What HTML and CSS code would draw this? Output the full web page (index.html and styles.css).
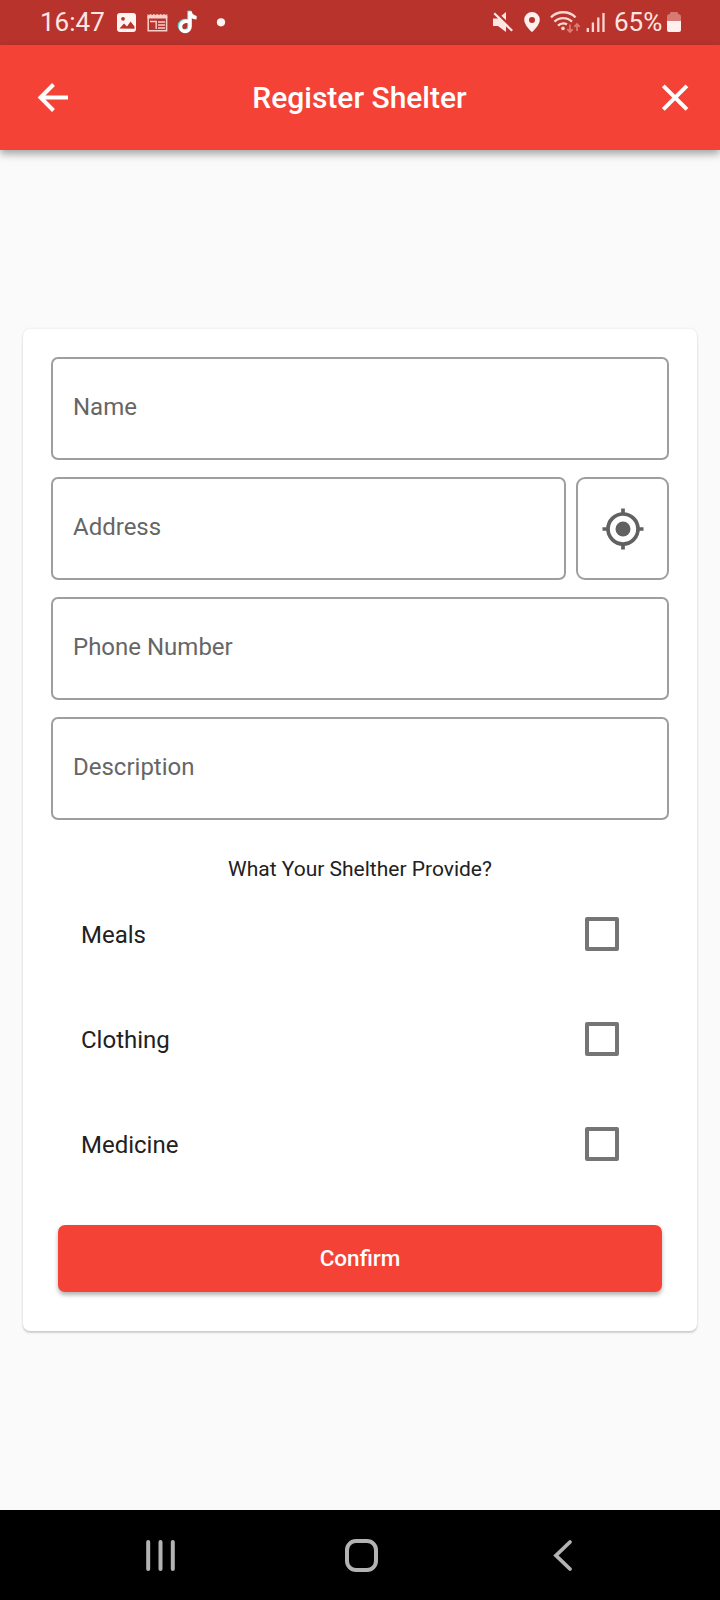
FILE: index.html
```html
<!DOCTYPE html>
<html lang="en">
<head>
<meta charset="utf-8">
<title>Register Shelter</title>
<link rel="stylesheet" href="styles.css">
</head>
<body>
<div class="screen">
  <div class="status">
    <span class="clock">16:47</span>
    <svg class="notifications" width="112" height="45" viewBox="0 0 112 45">
      <rect x="1" y="13" width="19" height="19" rx="3" fill="#fff4f2"/>
      <circle cx="7" cy="18.800" r="1.900" fill="#b8332c"/>
      <path d="M3.500 28.500l4.500-5 3 3 3.600-5 3.900 5v2.300z" fill="#b8332c"/>
      <path d="M32.200 16v14.700h18.400V16" fill="none" stroke="#f9cfca" stroke-width="1.500"/>
      <path d="M31.500 14l1.500 1 1.500-1 1.700 1 1.700-1 1.700 1 1.700-1 1.700 1 1.700-1 1.700 1 1.700-1 1.700 1 1.500-1v4.500H31.500z" fill="#f9cfca"/>
      <path d="M34 21.500h6.200v7.500M42 22h7M42 25h7M42 28h7" fill="none" stroke="#f9cfca" stroke-width="1.400"/>
      <g fill="none" stroke-width="3.600" transform="translate(2.500 0)">
        <path d="M70 21.400c-5-.8-8 1.800-8 5 0 3 2.100 5 4.700 5s4.800-2 4.800-5V11.500c.4 3.600 3 6 6.600 6.200" stroke="#58d9d5" transform="translate(-1 -.7)"/>
        <path d="M70 21.400c-5-.8-8 1.800-8 5 0 3 2.100 5 4.700 5s4.800-2 4.800-5V11.500c.4 3.600 3 6 6.600 6.200" stroke="#fff"/>
      </g>
      <circle cx="105" cy="22.300" r="4.100" fill="#fff4f2"/>
    </svg>
    <svg class="signals" width="116" height="45" viewBox="0 0 116 45">
      <path d="M3 18.500h5l8-6.500v20l-8-6H3z" fill="#ffe6e2"/>
      <path d="M4.500 11L25 30.500" stroke="#b8332c" stroke-width="2.500"/>
      <path d="M4.200 13.200l18 17.600" stroke="#ffe6e2" stroke-width="2.200"/>
      <path fill-rule="evenodd" d="M42 12a7.800 7.800 0 0 0-7.800 7.800c0 5.600 7.800 12.400 7.800 12.400s7.800-6.800 7.800-12.400A7.800 7.800 0 0 0 42 12zm0 5a3 3 0 1 1 0 6 3 3 0 0 1 0-6z" fill="#fff0ed"/>
      <g fill="none" stroke="#fbd7d2" stroke-width="2.400">
        <path d="M61 17.300a17.500 17.500 0 0 1 24.500 0M64.500 21.700a12.500 12.500 0 0 1 17.500 0M68 25.700a7.800 7.800 0 0 1 9-1.300"/>
      </g>
      <circle cx="73" cy="28.400" r="1.800" fill="#fbd7d2"/>
      <path d="M80 24.500v7.500m-2.700-2.900l2.700 2.900 2.700-2.900M87 31v-7m-2.700 2.900L87 24l2.700 2.900" fill="none" stroke="#e07c74" stroke-width="1.700"/>
      <path d="M97.800 28v4M102.900 22.500V32M108.300 17.500V32M113.500 13v19" stroke="#fbd7d2" stroke-width="2.300"/>
    </svg>
    <span class="percent">65%</span>
    <svg class="battery" width="16" height="45" viewBox="0 0 16 45">
      <path d="M1 21v-4.500q0-2.500 3-2.500V13q0-1 1-1h6q1 0 1 1v1q3 0 3 2.500V21z" fill="#d77a73"/>
      <path d="M1 21h14v9q0 2-2 2H3q-2 0-2-2z" fill="#fff0ed"/>
    </svg>
  </div>
  <header class="appbar">
    <svg width="32" height="32" viewBox="0 0 32 32"><path d="M16.500 2.500L3.500 15.500l13 13M4 15.500h27" fill="none" stroke="#fff" stroke-width="4"/></svg>
    <h1 class="title">Register Shelter</h1>
    <svg width="28" height="28" viewBox="0 0 28 28"><path d="M2.300 1.800l23.600 23.600M25.900 1.800L2.300 25.400" stroke="#fff" stroke-width="4"/></svg>
  </header>
  <main class="content">
    <form class="card">
      <div class="field">Name</div>
      <div class="field-row">
        <div class="field">Address</div>
        <div class="locate">
          <svg width="42" height="42" viewBox="0 0 42 42"><circle cx="21" cy="21" r="15" fill="none" stroke="#616161" stroke-width="3.700"/><circle cx="21" cy="21" r="7.500" fill="#616161"/><path d="M21 .5v5M21 36.500v5M.5 21h5M36.500 21h5" stroke="#616161" stroke-width="3.700"/></svg>
        </div>
      </div>
      <div class="field">Phone Number</div>
      <div class="field">Description</div>
      <h2 class="question">What Your Shelther Provide?</h2>
      <div class="option"><span class="option-label">Meals</span><span class="checkbox"></span></div>
      <div class="option"><span class="option-label">Clothing</span><span class="checkbox"></span></div>
      <div class="option"><span class="option-label">Medicine</span><span class="checkbox"></span></div>
      <div class="confirm">Confirm</div>
    </form>
  </main>
  <nav class="navbar">
    <svg width="720" height="90" viewBox="0 0 720 90" fill="none" stroke="#b3b3b3" stroke-linecap="round">
      <path d="M148.200 32v27M160.500 32v27M172.800 32v27" stroke-width="4"/>
      <rect x="347" y="31" width="29" height="29" rx="9" stroke-width="4"/>
      <path d="M570 32L556 45.500 570 59" stroke-width="3.800" stroke-linejoin="miter"/>
    </svg>
  </nav>
</div>
</body>
</html>
```
FILE: styles.css
```css
* { box-sizing: border-box; }
body { margin: 0; font-family: Roboto, sans-serif; }
.screen { width: 720px; height: 1600px; display: flex; flex-direction: column; background: #fafafa; overflow: hidden; }
.status { height: 45px; flex: none; display: flex; align-items: center; padding-left: 40px; background: #b8332c; color: #ffe6e2; font-size: 26px; line-height: 45px; }
.clock { width: 76px; }
.signals { margin-left: 262px; }
.percent { width: 52px; margin-left: 8px; white-space: nowrap; }
.appbar { height: 105px; flex: none; display: flex; align-items: center; justify-content: space-between; padding: 0 31px 0 37px; background: #f44336; color: #fff; box-shadow: 0 4px 8px rgba(0,0,0,.35); z-index: 1; }
.title { margin: 0 11px 0 0; font-size: 30px; font-weight: 500; line-height: 40px; }
.content { flex: 1; padding: 179px 23px 0; }
.card { height: 1002px; padding: 28px 28px 0; display: flex; flex-direction: column; background: #fff; border-radius: 7px; box-shadow: 0 2px 2px rgba(0,0,0,.16), 0 0 3px rgba(0,0,0,.09); }
.field { height: 103px; flex: none; display: flex; align-items: center; margin-bottom: 17px; padding: 0 0 4px 20px; border: 2px solid #9e9e9e; border-radius: 7px; color: #666; font-size: 24px; line-height: 32px; }
.field-row { display: flex; gap: 10px; }
.field-row .field { flex: 1; }
.locate { width: 93px; height: 103px; display: flex; align-items: center; justify-content: center; border: 2px solid #9e9e9e; border-radius: 9px; }
.question { height: 46px; margin: 9px 0 0; text-align: center; color: #212121; font-size: 21px; font-weight: 400; line-height: 46px; }
.option { height: 105px; flex: none; display: flex; align-items: center; justify-content: space-between; padding: 0 50px 0 30px; color: #212121; font-size: 24px; }
.question + .option { margin-top: -10px; }
.checkbox { width: 34px; height: 34px; margin-bottom: 2px; border: 4px solid #757575; border-radius: 2px; }
.confirm { height: 67px; flex: none; margin: 28px 7px 0; border-radius: 7px; background: #f44336; color: #fff; text-align: center; font-size: 22.500px; font-weight: 500; line-height: 67px; box-shadow: 0 3px 4px rgba(0,0,0,.3); }
.navbar { height: 90px; flex: none; background: #000; }
.navbar svg { display: block; }
```
